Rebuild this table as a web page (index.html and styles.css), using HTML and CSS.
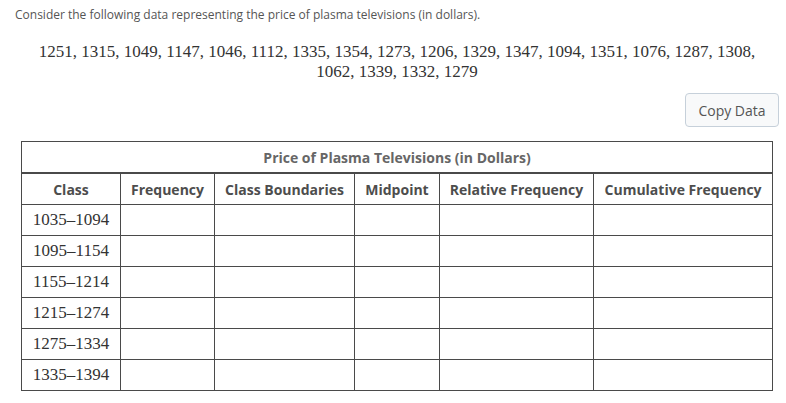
FILE: index.html
```html
<!DOCTYPE html>
<html>
<head>
<meta charset="utf-8">
<link rel="stylesheet" href="styles.css">
</head>
<body>
<div class="page">
  <p class="intro">Consider the following data representing the price of plasma televisions (in dollars).</p>
  <p class="data">1251, 1315, 1049, 1147, 1046, 1112, 1335, 1354, 1273, 1206, 1329, 1347, 1094, 1351, 1076, 1287, 1308,<br>1062, 1339, 1332, 1279</p>
  <div class="actions"><button class="copy">Copy Data</button></div>
  <table class="freq">
    <colgroup>
      <col class="c1"><col class="c2"><col class="c3"><col class="c4"><col class="c5"><col class="c6">
    </colgroup>
    <thead>
      <tr class="title-row"><th colspan="6">Price of Plasma Televisions (in Dollars)</th></tr>
      <tr class="head-row"><th>Class</th><th>Frequency</th><th>Class Boundaries</th><th>Midpoint</th><th>Relative Frequency</th><th>Cumulative Frequency</th></tr>
    </thead>
    <tbody>
      <tr><td>1035–1094</td><td></td><td></td><td></td><td></td><td></td></tr>
      <tr><td>1095–1154</td><td></td><td></td><td></td><td></td><td></td></tr>
      <tr><td>1155–1214</td><td></td><td></td><td></td><td></td><td></td></tr>
      <tr><td>1215–1274</td><td></td><td></td><td></td><td></td><td></td></tr>
      <tr><td>1275–1334</td><td></td><td></td><td></td><td></td><td></td></tr>
      <tr><td>1335–1394</td><td></td><td></td><td></td><td></td><td></td></tr>
    </tbody>
  </table>
</div>
</body>
</html>
```
FILE: styles.css
```css
html, body {
  margin: 0;
  padding: 0;
  background: #fff;
}
.page {
  padding: 6px 7px 0 15px;
}
.intro {
  margin: 0;
  font-family: "Open Sans", sans-serif;
  font-size: 12px;
  line-height: 18px;
  color: #555;
}
.data {
  margin: 18px 0 0 0;
  font-family: "Liberation Serif", serif;
  font-size: 17px;
  line-height: 20px;
  color: #333;
  text-align: center;
}
.actions {
  display: flex;
  justify-content: flex-end;
  margin-top: 11px;
}
.copy {
  width: 94px;
  height: 34px;
  font-family: "Open Sans", sans-serif;
  font-size: 14px;
  color: #555;
  background: #f8f9fa;
  border: 1px solid #c6d0da;
  border-radius: 4px;
  padding: 0;
}
.freq {
  margin: 14px 0 0 6px;
  border-collapse: collapse;
  width: 751px;
  table-layout: fixed;
  border: 1px solid #4a4a4a;
}
.c1 { width: 99px; }
.c2 { width: 94px; }
.c3 { width: 140px; }
.c4 { width: 85px; }
.c5 { width: 154px; }
.c6 { width: 179px; }
.freq th, .freq td {
  border: 1px solid #4a4a4a;
  padding: 0;
  height: 30px;
}
.freq th {
  font-family: "Open Sans", sans-serif;
  font-size: 14px;
  font-weight: 700;
  color: #4d4d4d;
  white-space: nowrap;
}
.title-row th {
  border-bottom: 2px solid #4a4a4a;
  color: #666;
}
.freq td {
  font-family: "Liberation Serif", serif;
  font-size: 17px;
  color: #333;
  text-align: center;
}
```
